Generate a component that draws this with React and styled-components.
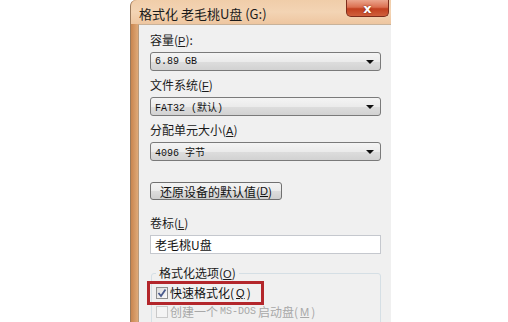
import styled, { createGlobalStyle } from 'styled-components';

const Global = createGlobalStyle`
  html, body {
    margin: 0;
    background: #ffffff;
  }
  body {
    width: 508px;
    height: 322px;
    overflow: hidden;
    font-family: "Noto Sans CJK SC", "Liberation Sans", sans-serif;
  }
`;

const Page = styled.div`
  padding-left: 130px;
  height: 322px;
  overflow: hidden;
`;

const Window = styled.div`
  width: 260px;
  height: 340px;
  display: flex;
  flex-direction: column;
  border-radius: 6px 0 0 0;
  background: linear-gradient(90deg, #c98650 0%, #e2ad7c 3%, #f1cfae 40%, #f4d6b9 100%);
  border-left: 1px solid #9b7a5c;
`;

const TitleBar = styled.div`
  height: 27px;
  display: flex;
  align-items: flex-start;
  padding-left: 8px;
  background: linear-gradient(180deg, #f0cda9 0%, #f3d4b4 50%, #eec6a0 100%);
  border-radius: 6px 0 0 0;
`;

const Title = styled.div`
  font-size: 13px;
  line-height: 16px;
  color: #1a1a1a;
  margin-top: 6px;
  white-space: nowrap;
`;

const CloseButton = styled.div`
  margin-left: auto;
  margin-right: 2px;
  width: 43px;
  height: 17px;
  box-sizing: border-box;
  display: flex;
  align-items: center;
  justify-content: center;
  border: 1px solid #7d2d1c;
  border-top: none;
  border-radius: 0 0 5px 5px;
  background: linear-gradient(180deg, #eba58d 0%, #db6f50 45%, #c2401f 55%, #d0603d 100%);
  color: #ffffff;
  font: bold 13px "DejaVu Sans", sans-serif;
  text-shadow: 0 0 2px #6d1c0c;
`;

const Body = styled.div`
  flex: 1;
  display: flex;
  padding-left: 7px;
`;

const Content = styled.div`
  flex: 1;
  background: #f0f0f0;
  border-top: 1px solid #c8b29a;
  border-left: 1px solid #b89a7c;
  padding: 7px 10px 0 11px;
  display: flex;
  flex-direction: column;
`;

const Label = styled.div`
  font-size: 12px;
  line-height: 16px;
  color: #1a1a1a;
  margin-top: ${(p) => p.$top || 0}px;
  white-space: nowrap;
`;

const Key = styled.span`
  text-decoration: underline;
  font-family: "Liberation Sans", sans-serif;
  font-size: 11px;
`;

const Select = styled.div`
  margin-top: 3px;
  margin-bottom: 6px;
  height: 19px;
  box-sizing: border-box;
  display: flex;
  align-items: center;
  padding: 0 6px 0 4px;
  border: 1px solid #7a7a7a;
  border-radius: 3px;
  background: linear-gradient(180deg, #f4f4f4 0%, #ebebeb 50%, #dddddd 51%, #d2d2d2 100%);
  font-family: "Liberation Mono", "Noto Sans CJK SC", monospace;
  font-size: 10px;
  color: #111;
`;

const Value = styled.span`
  flex: 1;
  white-space: pre;
`;

const Arrow = styled.span`
  width: 0;
  height: 0;
  border-left: 4px solid transparent;
  border-right: 4px solid transparent;
  border-top: 4px solid #111;
`;

const Button = styled.div`
  margin-top: 15px;
  width: 132px;
  height: 18px;
  box-sizing: border-box;
  display: flex;
  align-items: center;
  justify-content: center;
  border: 1px solid #707070;
  border-radius: 3px;
  background: linear-gradient(180deg, #f3f3f3 0%, #ebebeb 50%, #dddddd 51%, #cfcfcf 100%);
  font-size: 12px;
  color: #111;
  white-space: nowrap;
`;

const Input = styled.div`
  margin-top: 3px;
  height: 19px;
  box-sizing: border-box;
  display: flex;
  align-items: center;
  padding-left: 4px;
  border: 1px solid #c5c8ce;
  background: #ffffff;
  font-size: 12px;
  color: #111;
`;

const Group = styled.fieldset`
  margin: 11px 0 0 1px;
  padding: 0 0 20px 0;
  border: 1px solid #d5dfe5;
  border-radius: 3px;
  min-width: 0;
`;

const Legend = styled.legend`
  margin-left: 4px;
  padding: 0 3px;
  font-size: 12px;
  line-height: 16px;
  color: #1a1a1a;
`;

const Highlight = styled.div`
  display: flex;
  box-sizing: border-box;
  margin: -1px 0 0 -5px;
  border: 3px solid #b3262b;
  width: 117px;
  height: 24px;
  align-items: center;
  padding-left: 6px;
`;

const CheckRow = styled.div`
  display: flex;
  align-items: center;
  gap: 2px;
  font-size: 12px;
  line-height: 14px;
  color: ${(p) => (p.$disabled ? '#a8a8a8' : '#111')};
  white-space: nowrap;
  margin-left: ${(p) => (p.$disabled ? 4 : 0)}px;
`;

const Box = styled.span`
  width: 12px;
  height: 12px;
  box-sizing: border-box;
  border: 1px solid ${(p) => (p.$disabled ? '#c9c9c9' : '#8e8f8f')};
  background: ${(p) => (p.$disabled ? '#f4f4f4' : 'linear-gradient(135deg, #dcdcdc, #fbfbfb)')};
  display: flex;
  align-items: center;
  justify-content: center;
`;

const Mono = styled.span`
  font-family: "Liberation Mono", monospace;
  font-size: 10px;
`;

function Check() {
  return (
    <svg width="10" height="10" viewBox="0 0 10 10">
      <path d="M1.5 5 L4 8 L8.5 1.5" fill="none" stroke="#4a5b8c" strokeWidth="1.8" />
    </svg>
  );
}

function Combo({ children }) {
  return (
    <Select>
      <Value>{children}</Value>
      <Arrow />
    </Select>
  );
}

export default function App() {
  return (
    <>
      <Global />
      <Page>
        <Window>
          <TitleBar>
            <Title>格式化 老毛桃U盘 (G:)</Title>
            <CloseButton>x</CloseButton>
          </TitleBar>
          <Body>
            <Content>
              <Label>容量(<Key>P</Key>):</Label>
              <Combo>6.89 GB</Combo>
              <Label>文件系统(<Key>F</Key>)</Label>
              <Combo>FAT32 (默认)</Combo>
              <Label>分配单元大小(<Key>A</Key>)</Label>
              <Combo>4096 字节</Combo>
              <Button>还原设备的默认值(<Key>D</Key>)</Button>
              <Label $top={15}>卷标(<Key>L</Key>)</Label>
              <Input>老毛桃U盘</Input>
              <Group>
                <Legend>格式化选项(<Key>O</Key>)</Legend>
                <Highlight>
                  <CheckRow>
                    <Box>
                      <Check />
                    </Box>
                    快速格式化(<Key>Q</Key>)
                  </CheckRow>
                </Highlight>
                <CheckRow $disabled>
                  <Box $disabled />
                  创建一个 <Mono>MS-DOS</Mono> 启动盘(<Key>M</Key>)
                </CheckRow>
              </Group>
            </Content>
          </Body>
        </Window>
      </Page>
    </>
  );
}
